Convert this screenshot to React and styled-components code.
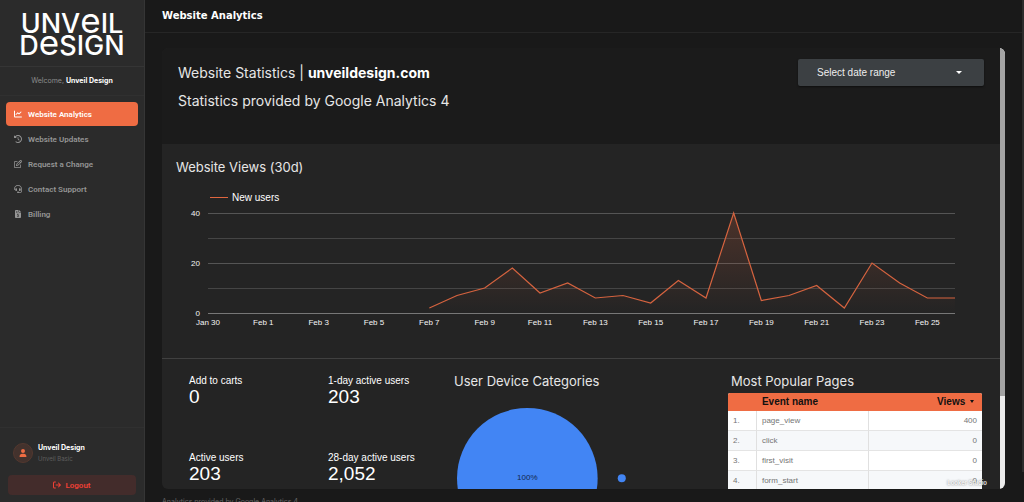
import React, { useState } from 'react';
import styled, { createGlobalStyle } from 'styled-components';
import {
	FaArrowRightFromBracket,
	FaChartLine,
	FaClockRotateLeft,
	FaFileInvoiceDollar,
	FaHeadset,
	FaRegPenToSquare,
	FaUser,
} from 'react-icons/fa6';

const NAV = [
	{ label: 'Website Analytics', icon: FaChartLine },
	{ label: 'Website Updates', icon: FaClockRotateLeft },
	{ label: 'Request a Change', icon: FaRegPenToSquare },
	{ label: 'Contact Support', icon: FaHeadset },
	{ label: 'Billing', icon: FaFileInvoiceDollar },
];

const STATS = [
	{ label: 'Add to carts', value: '0' },
	{ label: '1-day active users', value: '203' },
	{ label: 'Active users', value: '203' },
	{ label: '28-day active users', value: '2,052' },
];

const EVENTS = [
	{ name: 'page_view', views: 400 },
	{ name: 'click', views: 0 },
	{ name: 'first_visit', views: 0 },
	{ name: 'form_start', views: 0 },
];

// new users per day, Feb 7 to Feb 26
const FIRST_DAY = 8;
const NEW_USERS = [2, 7, 10, 18, 8, 12, 6, 7, 4, 13, 6, 40, 5, 7, 11, 2, 20, 12, 6, 6];
const DAYS = ['Jan 30', ...Array.from({ length: 13 }, (_, i) => `Feb ${i * 2 + 1}`)];

const PLOT = { left: 46, right: 793, top: 28, bottom: 128 };
const dayX = day => PLOT.left + (day * (PLOT.right - PLOT.left)) / 27;
const userY = users => PLOT.bottom - (users * (PLOT.bottom - PLOT.top)) / 40;

const UsersChart = () => {
	const line = NEW_USERS.map((n, i) => `${dayX(FIRST_DAY + i)},${userY(n)}`).join(' ');
	const area = `${dayX(FIRST_DAY)},${PLOT.bottom} ${line} ${PLOT.right},${PLOT.bottom}`;

	return (
		<Chart viewBox="0 0 838 150" role="img" aria-label="New users per day">
			<defs>
				<linearGradient id="fade" gradientUnits="userSpaceOnUse" x1="0" y1={PLOT.top} x2="0" y2={PLOT.bottom}>
					<stop offset="0" stopColor="#ef6c43" stopOpacity="0.2" />
					<stop offset="1" stopColor="#ef6c43" stopOpacity="0" />
				</linearGradient>
			</defs>
			<rect x="48" y="12" width="18" height="1" fill="#e0663f" />
			<LegendText x="70" y="16">New users</LegendText>
			{[40, 30, 20, 10, 0].map(n => (
				<line
					key={n}
					x1={PLOT.left}
					x2={PLOT.right}
					y1={userY(n) + 0.5}
					y2={userY(n) + 0.5}
					stroke={n === 0 ? '#777777' : n % 20 ? '#454545' : '#555555'}
				/>
			))}
			{[40, 20, 0].map(n => (
				<AxisText key={n} x="38" y={userY(n) + 3} textAnchor="end">
					{n}
				</AxisText>
			))}
			{DAYS.map((day, i) => (
				<AxisText key={day} x={dayX(i * 2)} y="140" textAnchor="middle">
					{day}
				</AxisText>
			))}
			<polygon points={area} fill="url(#fade)" />
			<polyline points={line} fill="none" stroke="#d5633f" strokeWidth="1.2" />
		</Chart>
	);
};

const App = () => {
	const [active, setActive] = useState('Website Analytics');

	return (
		<Page>
			<GlobalStyle />
			<Sidebar>
				<Logo aria-label="Unveil Design">
					<LogoLine>
						UNV<LogoE>e</LogoE>IL
					</LogoLine>
					<LogoLine>
						D<LogoE>e</LogoE>SIGN
					</LogoLine>
				</Logo>
				<Welcome>
					Welcome, <strong>Unveil Design</strong>
				</Welcome>
				<Nav>
					{NAV.map(({ label, icon: Icon }) => (
						<NavLink key={label} href="#" $active={label === active} onClick={() => setActive(label)}>
							<Icon />
							{label}
						</NavLink>
					))}
				</Nav>
				<Account>
					<Profile>
						<Avatar>
							<FaUser />
						</Avatar>
						<div>
							<UserName>Unveil Design</UserName>
							<Plan>Unveil Basic</Plan>
						</div>
					</Profile>
					<Logout type="button">
						<FaArrowRightFromBracket />
						Logout
					</Logout>
				</Account>
			</Sidebar>
			<Main>
				<TopBar>
					<PageTitle>Website Analytics</PageTitle>
				</TopBar>
				<Content>
					<Frame>
						<Report>
							<ReportHead>
								<div>
									<HeadLine>
										Website Statistics | <strong>unveildesign.com</strong>
									</HeadLine>
									<HeadLine>Statistics provided by Google Analytics 4</HeadLine>
								</div>
								<DateRange>
									<DateSelect aria-label="Date range">
										<option>Select date range</option>
									</DateSelect>
									<Caret />
								</DateRange>
							</ReportHead>
							<Views>
								<ViewsTitle>Website Views (30d)</ViewsTitle>
								<UsersChart />
							</Views>
							<Details>
								<Stats>
									{STATS.map(({ label, value }) => (
										<div key={label}>
											<StatLabel>{label}</StatLabel>
											<StatValue>{value}</StatValue>
										</div>
									))}
								</Stats>
								<Devices>
									<SectionTitle>User Device Categories</SectionTitle>
									<Pie viewBox="0 0 180 144" role="img" aria-label="Devices">
										<circle cx="73" cy="72" r="70" fill="#4285f4" />
										<circle cx="167" cy="72" r="4" fill="#4285f4" />
										<PieText x="73" y="74" textAnchor="middle">100%</PieText>
									</Pie>
								</Devices>
								<Pages>
									<PagesTitle>Most Popular Pages</PagesTitle>
									<Table>
										<thead>
											<tr>
												<HeadCell $width="11%" />
												<HeadCell>Event name</HeadCell>
												<HeadCell $width="45%" $right>
													Views <SortCaret />
												</HeadCell>
											</tr>
										</thead>
										<tbody>
											{EVENTS.map(({ name, views }, i) => (
												<Row key={name}>
													<Cell>{i + 1}.</Cell>
													<Cell>{name}</Cell>
													<Cell $right>{views}</Cell>
												</Row>
											))}
										</tbody>
									</Table>
								</Pages>
							</Details>
						</Report>
						<FrameTrack>
							<FrameThumb />
						</FrameTrack>
						<Watermark>Looker Studio</Watermark>
					</Frame>
					<Caption>Analytics provided by Google Analytics 4</Caption>
				</Content>
			</Main>
			<PageTrack>
				<PageThumb />
			</PageTrack>
		</Page>
	);
};

// styled
const GlobalStyle = createGlobalStyle`
	* {
		box-sizing: border-box;
	}

	body {
		margin: 0;
		background: #191919;
		font-family: Inter, 'Liberation Sans', sans-serif;
	}
`;

const Page = styled.div`
	display: flex;
	height: 100vh;
	overflow: hidden;
`;

const Sidebar = styled.aside`
	flex: none;
	width: 145px;
	display: flex;
	flex-direction: column;
	background: #2b2b2b;
	border-right: 1px solid #353535;
`;

const Logo = styled.div`
	height: 67px;
	padding-top: 9px;
	border-bottom: 1px solid #353535;
	color: #ffffff;
	font-size: 27px;
	font-weight: 500;
	text-align: center;
`;

const LogoLine = styled.div`
	height: 22px;
	line-height: 22px;
	white-space: nowrap;
`;

const LogoE = styled.span`
	font-size: 35px;
	font-weight: 400;
	line-height: 22px;
`;

const Welcome = styled.p`
	margin: 0;
	height: 29px;
	border-bottom: 1px solid #303030;
	color: #8c8c8c;
	font-size: 7px;
	line-height: 28px;
	text-align: center;

	strong {
		color: #ffffff;
	}
`;

const Nav = styled.nav`
	flex: 1;
	display: flex;
	flex-direction: column;
	gap: 1px;
	padding: 6px;
`;

const NavLink = styled.a`
	display: flex;
	align-items: center;
	gap: 6px;
	height: 24px;
	padding: 0 8px;
	border-radius: 4px;
	background: ${({ $active }) => ($active ? '#ef6c43' : 'transparent')};
	color: ${({ $active }) => ($active ? '#ffffff' : '#959595')};
	font-family: Roboto, sans-serif;
	font-size: 8px;
	font-weight: 600;
	text-decoration: none;

	svg {
		width: 8px;
		height: 8px;
	}
`;

const Account = styled.div`
	padding: 14px 8px 7px;
	border-top: 1px solid #303030;
`;

const Profile = styled.div`
	display: flex;
	align-items: center;
	gap: 5px;
	padding: 0 5px 11px;
`;

const Avatar = styled.div`
	display: flex;
	align-items: center;
	justify-content: center;
	width: 20px;
	height: 20px;
	border: 1px solid #53382f;
	border-radius: 50%;
	background: #43322d;
	color: #ef6c43;
	font-size: 8px;
`;

const UserName = styled.div`
	color: #ffffff;
	font-size: 7px;
	font-weight: 700;
	line-height: 11px;
`;

const Plan = styled.div`
	color: #5f5f5f;
	font-size: 6px;
	line-height: 11px;
`;

const Logout = styled.button`
	display: flex;
	align-items: center;
	justify-content: center;
	gap: 4px;
	width: 100%;
	height: 20px;
	border: 0;
	border-radius: 4px;
	background: #432c2b;
	color: #ef4035;
	font-family: Roboto, sans-serif;
	font-size: 8px;
	font-weight: 600;
`;

const Main = styled.main`
	flex: 1;
	min-width: 0;
	display: flex;
	flex-direction: column;
`;

const TopBar = styled.header`
	flex: none;
	height: 33px;
	padding: 0 17px;
	border-bottom: 1px solid #262626;
`;

const PageTitle = styled.h1`
	margin: 0;
	color: #ffffff;
	font-family: 'DejaVu Sans', sans-serif;
	font-size: 10px;
	font-weight: 700;
	line-height: 32px;
`;

const Content = styled.div`
	flex: 1;
	min-height: 0;
	display: flex;
	flex-direction: column;
	padding: 15px 17px 0;
`;

const Frame = styled.section`
	position: relative;
	flex: 1;
	min-height: 0;
	display: flex;
	border-radius: 6px;
	background: #242424;
	overflow: hidden;
`;

const Report = styled.div`
	flex: 1;
	min-width: 0;
	overflow: hidden;
`;

const ReportHead = styled.header`
	display: flex;
	justify-content: space-between;
	align-items: flex-start;
	height: 96px;
	padding: 11px 16px;
	background: #1b1b1b;
`;

const HeadLine = styled.p`
	margin: 0;
	color: #e6e6e6;
	font-size: 14px;
	line-height: 28px;

	strong {
		color: #ffffff;
	}
`;

const DateRange = styled.div`
	position: relative;
	width: 186px;
`;

const DateSelect = styled.select`
	display: block;
	width: 100%;
	height: 27px;
	padding: 0 19px;
	appearance: none;
	border: 0;
	border-radius: 2px;
	background: #3c4043;
	box-shadow: 0 1px 2px rgba(0, 0, 0, 0.5);
	color: #eeeeee;
	font-family: 'Liberation Sans', sans-serif;
	font-size: 10px;
`;

const Caret = styled.span`
	position: absolute;
	top: 12px;
	right: 22px;
	border: 3px solid transparent;
	border-top-color: #ffffff;
	pointer-events: none;
`;

const Views = styled.section`
	height: 214px;
	padding-top: 15px;
	overflow: hidden;
`;

const SectionTitle = styled.h2`
	margin: 0;
	color: #e6e6e6;
	font-size: 13px;
	font-weight: 400;
	line-height: 16px;
	white-space: nowrap;
`;

const ViewsTitle = styled(SectionTitle)`
	padding-left: 14px;
	margin-bottom: 10px;
`;

const Chart = styled.svg`
	display: block;
	width: 100%;
`;

const LegendText = styled.text`
	fill: #ffffff;
	font-family: 'Liberation Sans', sans-serif;
	font-size: 10px;
`;

const AxisText = styled.text`
	fill: #f4f4f4;
	font-family: 'Liberation Sans', sans-serif;
	font-size: 8px;
`;

const Details = styled.section`
	display: grid;
	grid-template-columns: 265fr 274fr 254fr;
	padding: 14px 18px 0 27px;
	border-top: 1px solid #404040;
`;

const Stats = styled.div`
	display: grid;
	grid-template-columns: 139fr 126fr;
	grid-auto-rows: 77px;
	font-family: 'Liberation Sans', sans-serif;
`;

const StatLabel = styled.div`
	color: #ffffff;
	font-size: 10px;
	line-height: 16px;
`;

const StatValue = styled.div`
	color: #ffffff;
	font-size: 19px;
	line-height: 16px;
`;

const Devices = styled.div`
	min-width: 0;
`;

const Pie = styled.svg`
	display: block;
	width: 66%;
	margin-top: 17px;
`;

const PieText = styled.text`
	fill: #14284a;
	font-family: 'Liberation Sans', sans-serif;
	font-size: 8px;
`;

const Pages = styled.div`
	min-width: 0;
`;

const PagesTitle = styled(SectionTitle)`
	padding-left: 3px;
	margin-bottom: 4px;
`;

const Table = styled.table`
	width: 100%;
	border-spacing: 0;
	table-layout: fixed;
	border-radius: 2px;
	background: #ffffff;
	overflow: hidden;
	font-family: 'Liberation Sans', sans-serif;
`;

const HeadCell = styled.th`
	width: ${({ $width }) => $width || 'auto'};
	height: 18px;
	padding: 0 ${({ $right }) => ($right ? 8 : 6)}px;
	background: #ef6c43;
	color: #111111;
	font-size: 10px;
	line-height: 18px;
	text-align: ${({ $right }) => ($right ? 'right' : 'left')};
`;

const SortCaret = styled.span`
	display: inline-block;
	margin-left: 2px;
	border: 2px solid transparent;
	border-top: 3px solid #111111;
`;

const Row = styled.tr`
	&:nth-child(even) {
		background: #f6f8fa;
	}
`;

const Cell = styled.td`
	height: 20px;
	padding: 0 5px;
	border-bottom: 1px solid #e4e4e4;
	color: #757575;
	font-size: 8px;
	text-align: ${({ $right }) => ($right ? 'right' : 'left')};

	& + & {
		border-left: 1px solid #e0e0e0;
	}
`;

const FrameTrack = styled.div`
	flex: none;
	width: 5px;
	background: #ececec;
`;

const FrameThumb = styled.div`
	height: 79%;
	background: #a3a3a3;
`;

const Watermark = styled.span`
	position: absolute;
	right: 18px;
	bottom: 1px;
	color: #ffffff;
	font-size: 6px;
	font-weight: 500;
	line-height: 10px;
	text-shadow: 0 0 2px #555555;
`;

const Caption = styled.p`
	flex: none;
	height: 13px;
	margin: 0;
	padding-top: 8px;
	overflow: hidden;
	color: #666666;
	font-size: 7px;
	line-height: 10px;
`;

const PageTrack = styled.div`
	flex: none;
	width: 2px;
`;

const PageThumb = styled.div`
	height: 94%;
	background: #2c2c2c;
`;

export default App;
